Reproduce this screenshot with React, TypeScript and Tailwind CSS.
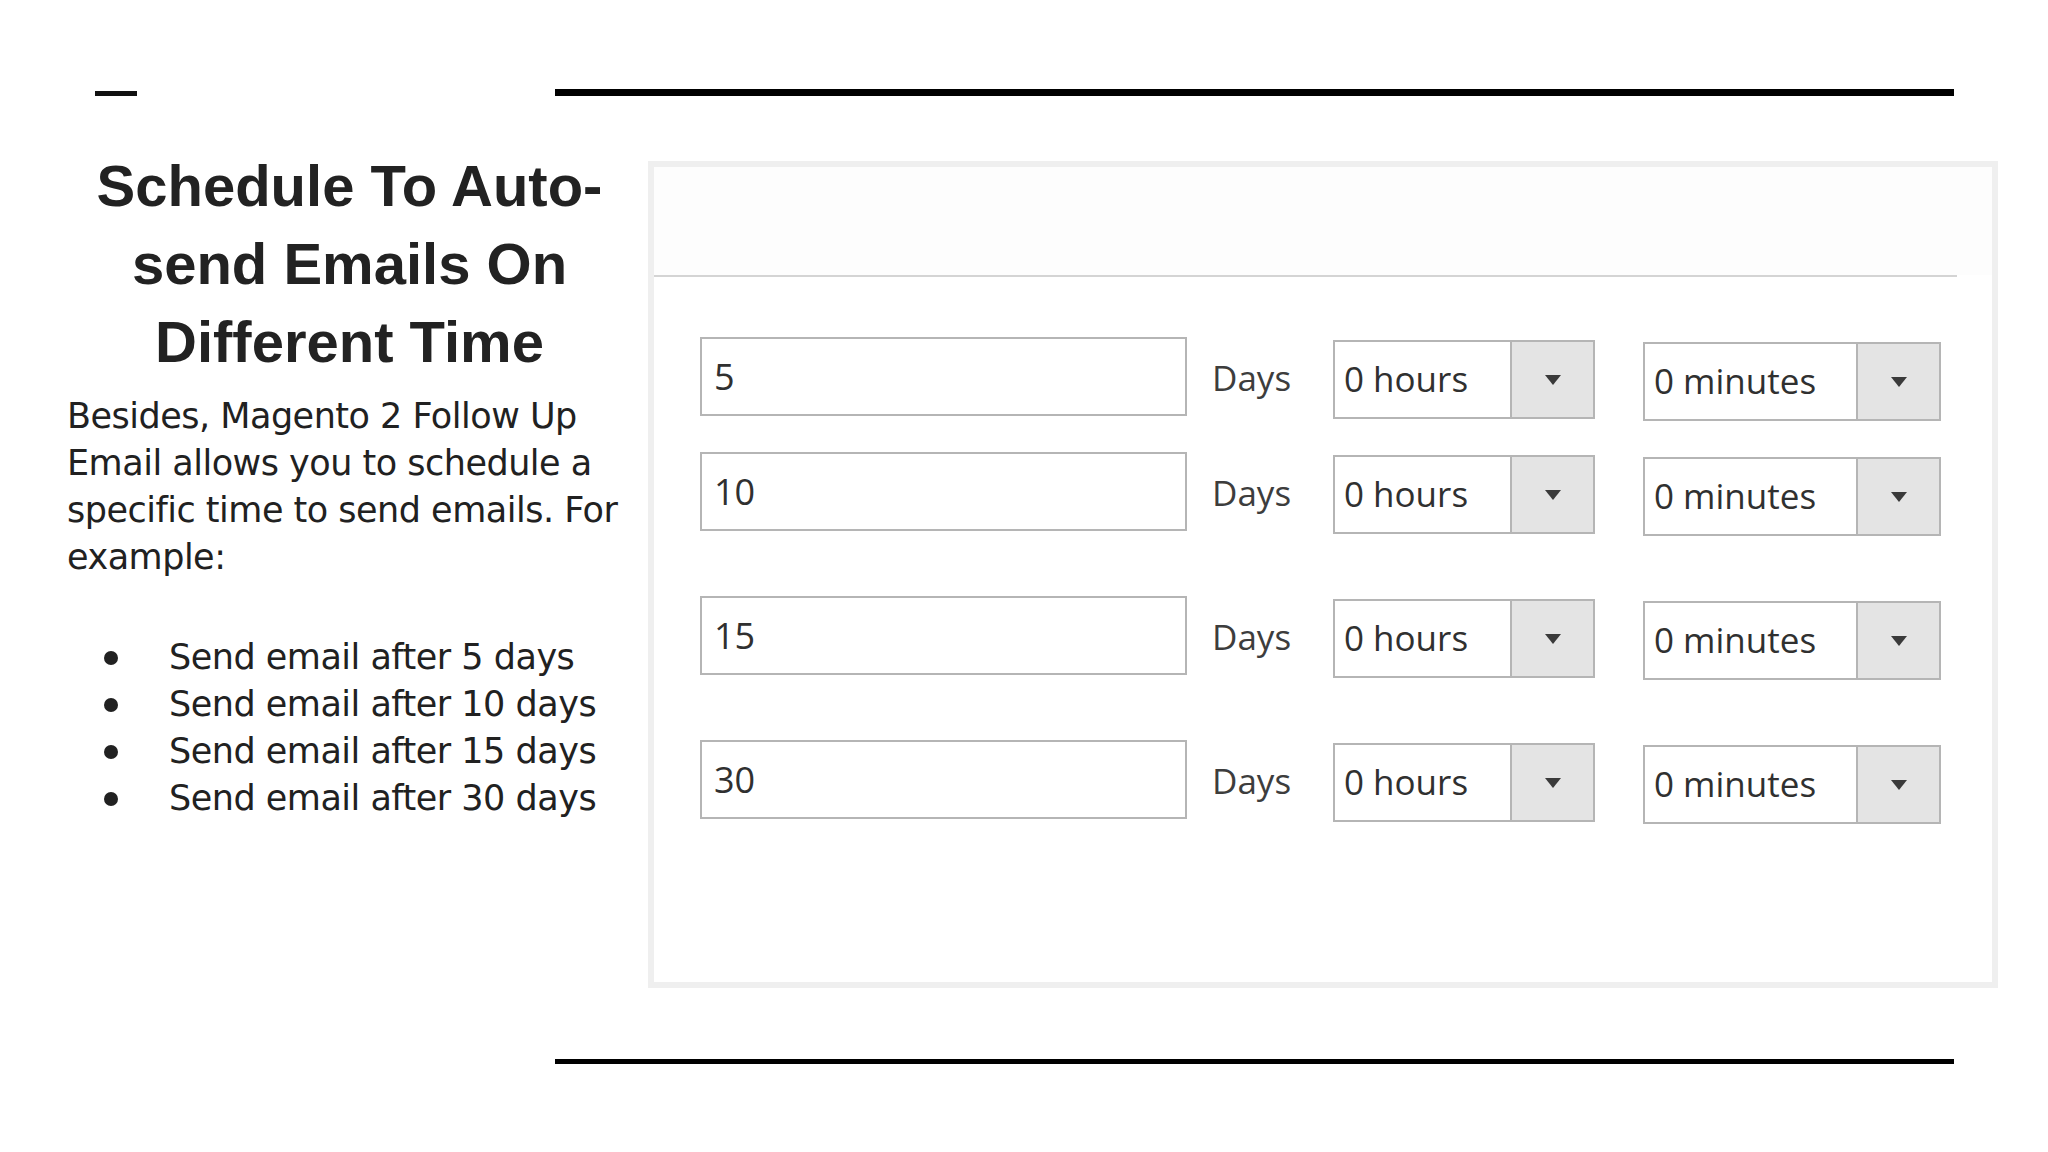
import React from 'react';

const rows = [
  { days: '5', gap: 'mt-[60px]' },
  { days: '10', gap: 'mt-[31px]' },
  { days: '15', gap: 'mt-[60px]' },
  { days: '30', gap: 'mt-[60px]' },
];

const bullets = ['Send email after 5 days', 'Send email after 10 days', 'Send email after 15 days', 'Send email after 30 days'];

function Caret() {
  return (
    <svg width="16" height="10" viewBox="0 0 16 10">
      <polygon points="0,0 16,0 8,10" fill="#3a3a3a" />
    </svg>
  );
}

function Select({ label, width, offset }: { label: string; width: string; offset: string }) {
  return (
    <div className={`${width} ${offset} flex h-[79px] border-2 border-[#b5b5b5] bg-white`}>
      <div className="flex flex-1 items-center pl-[9px] text-[35px] text-[#303030]">{label}</div>
      <div className="flex w-[83px] items-center justify-center border-l-2 border-[#b5b5b5] bg-[#e4e4e4]">
        <Caret />
      </div>
    </div>
  );
}

export default function App() {
  return (
    <div className="h-[1152px] w-[2048px] overflow-hidden bg-white">
      {/* top rules */}
      <div className="flex items-start pt-[89px]">
        <div className="ml-[95px] mt-[2px] h-[5px] w-[42px] bg-[#111]" />
        <div className="ml-[418px] h-[7px] w-[1399px] bg-black" />
      </div>

      <div className="mt-[51px] flex items-start">
        {/* left column */}
        <div className="ml-[67px] w-[565px] text-[#212121]">
          <h1 className="text-center font-['Liberation_Sans',Arial,sans-serif] text-[58px] font-bold leading-[78px] text-[#222]">
            Schedule To Auto-send Emails On Different Time
          </h1>
          <p className="mt-[12px] font-['DejaVu_Sans',Verdana,sans-serif] text-[35px] leading-[47px] tracking-[-0.5px]">
            Besides, Magento 2 Follow Up Email allows you to schedule a specific time to send emails. For example:
          </p>
          <ul className="mt-[53px] font-['DejaVu_Sans',Verdana,sans-serif] text-[35px] leading-[47px] tracking-[-0.5px]">
            {bullets.map((b) => (
              <li key={b} className="flex items-center pl-[37px]">
                <span className="h-[14px] w-[14px] shrink-0 rounded-full bg-[#212121]" />
                <span className="ml-[51px]">{b}</span>
              </li>
            ))}
          </ul>
        </div>

        {/* screenshot panel */}
        <div className="ml-[16px] mt-[14px] h-[827px] w-[1350px] border-[6px] border-[#efefef] bg-white font-['Open_Sans',sans-serif]">
          <div className="h-[108px] bg-[#fdfdfd]" />
          <div className="mr-[35px] h-[2px] bg-[#d4d4d4]" />
          {rows.map((r) => (
            <div key={r.days} className={`${r.gap} flex items-start pl-[46px]`}>
              <input
                readOnly
                defaultValue={r.days}
                className="h-[79px] w-[487px] border-2 border-[#b5b5b5] bg-white pl-[12px] font-['Open_Sans',sans-serif] text-[36px] text-[#303030] outline-none"
              />
              <div className="ml-[25px] flex h-[79px] w-[121px] items-center pt-[3px] text-[35px] text-[#3d3d3d]">Days</div>
              <Select label="0 hours" width="w-[262px]" offset="mt-[3px]" />
              <div className="ml-[48px]">
                <Select label="0 minutes" width="w-[298px]" offset="mt-[5px]" />
              </div>
            </div>
          ))}
        </div>
      </div>

      {/* bottom rule */}
      <div className="ml-[555px] mt-[71px] h-[5px] w-[1399px] bg-black" />
    </div>
  );
}
